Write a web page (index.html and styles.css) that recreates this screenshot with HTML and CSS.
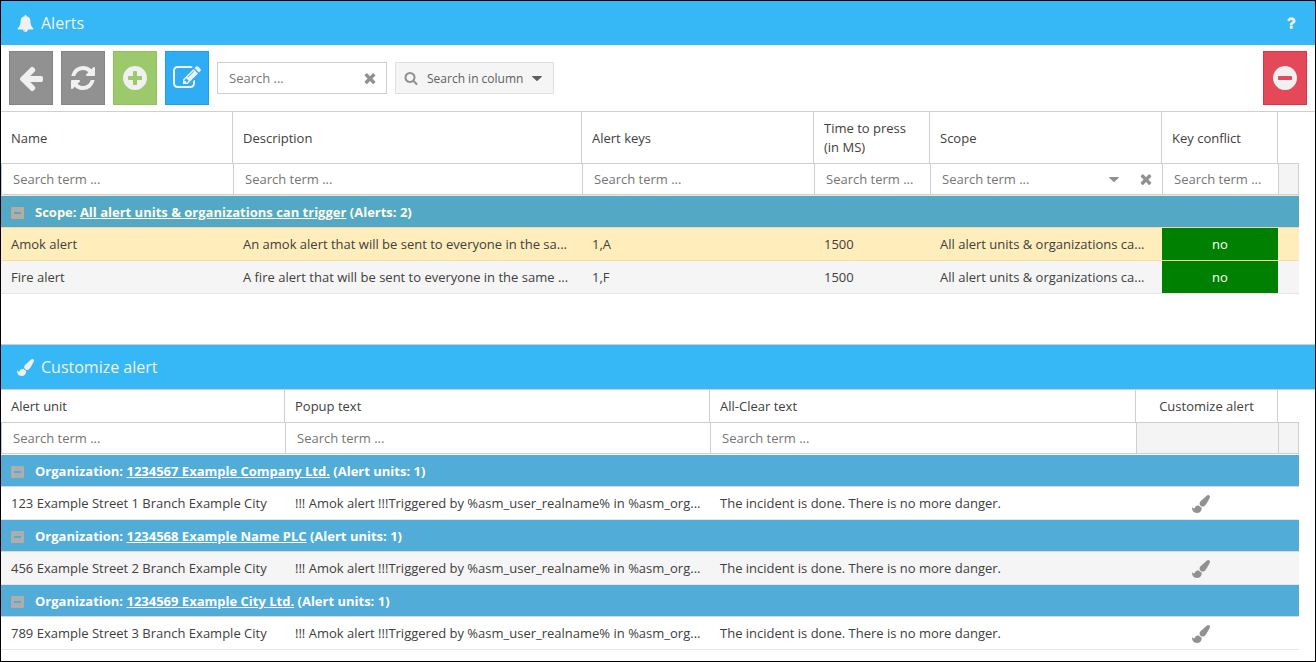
FILE: index.html
```html
<!DOCTYPE html>
<html lang="en">
<head>
<meta charset="utf-8">
<title>Alerts</title>
<link rel="stylesheet" href="styles.css">
</head>
<body>
<svg class="sprite" aria-hidden="true">
  <symbol id="i-bell" viewBox="0 0 1792 1792"><path d="M912 1696q0-16-16-16-59 0-101.500-42.500t-42.500-101.500q0-16-16-16t-16 16q0 73 51.500 124.500t124.500 51.500q16 0 16-16zm816-288q0 52-38 90t-90 38h-448q0 106-75 181t-181 75-181-75-75-181h-448q-52 0-90-38t-38-90q50-42 91-88t85-119.500 74.500-158.500 50-206 19.500-260q0-152 117-282.500t307-158.500q-8-19-8-39 0-40 28-68t68-28 68 28 28 68q0 20-8 39 190 28 307 158.500t117 282.500q0 139 19.500 260t50 206 74.500 158.500 85 119.500 91 88z"/></symbol>
  <symbol id="i-question" viewBox="0 0 1792 1792"><path d="M1088 1256v240q0 16-12 28t-28 12h-240q-16 0-28-12t-12-28v-240q0-16 12-28t28-12h240q16 0 28 12t12 28zm316-600q0 54-15.500 101t-35 76.500-55 59.500-57.500 43.500-61 35.500q-41 23-68.500 65t-27.500 67q0 17-12 32.500t-28 15.500h-240q-15 0-25.500-18.500t-10.500-37.500v-45q0-83 65-156.500t143-108.500q59-27 84-56t25-76q0-42-46.500-74t-107.500-32q-65 0-108 29-35 25-107 115-13 16-31 16-12 0-25-8l-164-125q-13-10-15.500-25t5.500-28q160-266 464-266 80 0 161 31t146 83 106 127.500 41 158.500z"/></symbol>
  <symbol id="i-back" viewBox="0 0 1792 1792"><path d="M1664 896v128q0 53-32.500 90.500t-84.500 37.500h-704l293 294q38 36 38 90t-38 90l-75 76q-37 37-90 37-52 0-91-37l-651-652q-37-37-37-90 0-52 37-91l651-650q38-38 91-38 52 0 90 38l75 74q38 38 38 91t-38 91l-293 293h704q52 0 84.500 37.500t32.500 90.500z"/></symbol>
  <symbol id="i-refresh" viewBox="0 0 1792 1792"><path d="M1639 1056q0 5-1 7-64 268-268 434.500t-478 166.500q-146 0-282.500-55t-243.500-157l-129 129q-19 19-45 19t-45-19-19-45v-448q0-26 19-45t45-19h448q26 0 45 19t19 45-19 45l-137 137q71 66 161 102t187 36q134 0 250-65t186-179q11-17 53-117 8-23 30-23h192q13 0 22.500 9.500t9.500 22.500zm25-800v448q0 26-19 45t-45 19h-448q-26 0-45-19t-19-45 19-45l138-138q-148-137-349-137-134 0-250 65t-186 179q-11 17-53 117-8 23-30 23h-199q-13 0-22.500-9.500t-9.500-22.500v-7q65-268 270-434.500t480-166.500q146 0 284 55.500t245 156.500l130-129q19-19 45-19t45 19 19 45z"/></symbol>
  <symbol id="i-plus" viewBox="0 0 1792 1792"><path d="M1344 960v-128q0-26-19-45t-45-19h-256v-256q0-26-19-45t-45-19h-128q-26 0-45 19t-19 45v256h-256q-26 0-45 19t-19 45v128q0 26 19 45t45 19h256v256q0 26 19 45t45 19h128q26 0 45-19t19-45v-256h256q26 0 45-19t19-45zm320-64q0 209-103 385.500t-279.500 279.500-385.500 103-385.500-103-279.500-279.500-103-385.500 103-385.500 279.500-279.500 385.500-103 385.500 103 279.500 279.500 103 385.500z"/></symbol>
  <symbol id="i-minus" viewBox="0 0 1792 1792"><path d="M1344 960v-128q0-26-19-45t-45-19h-768q-26 0-45 19t-19 45v128q0 26 19 45t45 19h768q26 0 45-19t19-45zm320-64q0 209-103 385.500t-279.500 279.500-385.500 103-385.500-103-279.500-279.500-103-385.500 103-385.500 279.500-279.500 385.500-103 385.500 103 279.500 279.500 103 385.500z"/></symbol>
  <symbol id="i-edit" viewBox="0 0 1792 1792"><path d="M888 1184l116-116-152-152-116 116v56h96v96h56zm440-720q-16-16-33 1l-350 350q-17 17-1 33t33-1l350-350q17-17 1-33zm80 594v190q0 119-84.500 203.500t-203.500 84.500h-832q-119 0-203.500-84.500t-84.500-203.500v-832q0-119 84.500-203.500t203.500-84.500h832q63 0 117 25 15 7 18 23 3 17-9 29l-49 49q-14 14-32 8-23-6-45-6h-832q-66 0-113 47t-47 113v832q0 66 47 113t113 47h832q66 0 113-47t47-113v-126q0-13 9-22l64-64q15-15 35-7t20 29zm-96-738l288 288-672 672h-288v-288zm444 132l-92 92-288-288 92-92q28-28 68-28t68 28l152 152q28 28 28 68t-28 68z"/></symbol>
  <symbol id="i-times" viewBox="0 0 1792 1792"><path d="M1490 1322q0 40-28 68l-136 136q-28 28-68 28t-68-28l-294-294-294 294q-28 28-68 28t-68-28l-136-136q-28-28-28-68t28-68l294-294-294-294q-28-28-28-68t28-68l136-136q28-28 68-28t68 28l294 294 294-294q28-28 68-28t68 28l136 136q28 28 28 68t-28 68l-294 294 294 294q28 28 28 68z"/></symbol>
  <symbol id="i-search" viewBox="0 0 1792 1792"><path d="M1216 832q0-185-131.500-316.500t-316.500-131.500-316.500 131.500-131.500 316.500 131.500 316.500 316.500 131.500 316.500-131.500 131.500-316.500zm512 832q0 52-38 90t-90 38q-54 0-90-38l-343-342q-179 124-399 124-143 0-273.500-55.500t-225-150-150-225-55.500-273.500 55.500-273.500 150-225 225-150 273.500-55.500 273.500 55.500 225 150 150 225 55.500 273.500q0 220-124 399l343 343q37 37 37 90z"/></symbol>
  <symbol id="i-brush" viewBox="0 0 1792 1792"><path d="M1615 0q70 0 122.500 46.500t52.500 116.500q0 63-45 151-332 629-465 752-97 91-218 91-126 0-216.500-92.500t-90.500-219.500q0-128 92-212l638-579q59-54 130-54zm-909 1034q39 76 106.500 130t150.500 76l1 71q4 213-129.500 347t-348.500 134q-123 0-218-46.500t-152.500-127.500-86.500-183-29-220q7 5 41 30t62 44.500 59 36.500 46 17q41 0 55-37 25-66 57.500-112.500t69.500-76 88-47.500 103-25.500 125-10.500z"/></symbol>
  <symbol id="i-caret" viewBox="0 0 10 5"><path d="M0.500 0h9a.5.5 0 0 1 .3.800L5.500 4.800a.7.700 0 0 1-1 0L.2.800A.5.500 0 0 1 .5 0z"/></symbol>
</svg>

<main class="app">
  <section class="panel panel-alerts">
    <header class="titlebar">
      <svg class="title-icon"><use href="#i-bell"/></svg>
      <h1 class="title">Alerts</h1>
      <button class="help" type="button" aria-label="Help"><svg class="icon-16"><use href="#i-question"/></svg></button>
    </header>
    <div class="toolbar">
      <button class="tool tool-gray" type="button" aria-label="Back"><svg class="tool-icon"><use href="#i-back"/></svg></button>
      <button class="tool tool-gray" type="button" aria-label="Refresh"><svg class="tool-icon"><use href="#i-refresh"/></svg></button>
      <button class="tool tool-green" type="button" aria-label="Add"><svg class="tool-icon"><use href="#i-plus"/></svg></button>
      <button class="tool tool-blue" type="button" aria-label="Edit"><svg class="tool-icon"><use href="#i-edit"/></svg></button>
      <div class="search">
        <input class="field" type="text" placeholder="Search ..." aria-label="Search">
        <button class="clear" type="button" aria-label="Clear search"><svg class="icon-16"><use href="#i-times"/></svg></button>
      </div>
      <button class="column-menu" type="button"><svg class="icon-14"><use href="#i-search"/></svg><span class="column-label">Search in column</span><svg class="caret"><use href="#i-caret"/></svg></button>
      <button class="tool tool-red" type="button" aria-label="Delete"><svg class="tool-icon"><use href="#i-minus"/></svg></button>
    </div>
    <div class="grid-wrap">
      <table class="grid grid-alerts">
        <colgroup><col class="w-232"><col><col class="w-232"><col class="w-116"><col class="w-232"><col class="w-116"><col class="w-21"></colgroup>
        <thead>
          <tr class="heads tall"><th>Name</th><th>Description</th><th>Alert keys</th><th class="wrap">Time to press (in MS)</th><th>Scope</th><th>Key conflict</th><td></td></tr>
          <tr class="filters">
            <td><input class="field" type="text" placeholder="Search term ..." aria-label="Filter name"></td>
            <td><input class="field" type="text" placeholder="Search term ..." aria-label="Filter description"></td>
            <td><input class="field" type="text" placeholder="Search term ..." aria-label="Filter alert keys"></td>
            <td><input class="field" type="text" placeholder="Search term ..." aria-label="Filter time to press"></td>
            <td><div class="combo"><select class="field" aria-label="Filter scope"><option>Search term ...</option></select><svg class="caret"><use href="#i-caret"/></svg><button class="clear" type="button" aria-label="Clear scope filter"><svg class="icon-16"><use href="#i-times"/></svg></button></div></td>
            <td><input class="field" type="text" placeholder="Search term ..." aria-label="Filter key conflict"></td>
            <td class="off"></td>
          </tr>
        </thead>
        <tbody>
          <tr class="group first teal"><td colspan="7"><div class="group-line"><button class="toggle" type="button" aria-label="Collapse group"></button><span>Scope: <a class="group-link" href="#">All alert units &amp; organizations can trigger</a> (Alerts: 2)</span></div></td></tr>
          <tr class="row selected"><td>Amok alert</td><td>An amok alert that will be sent to everyone in the sa...</td><td>1,A</td><td>1500</td><td>All alert units &amp; organizations ca...</td><td class="ok">no</td><td></td></tr>
          <tr class="row alt"><td>Fire alert</td><td>A fire alert that will be sent to everyone in the same ...</td><td>1,F</td><td>1500</td><td>All alert units &amp; organizations ca...</td><td class="ok">no</td><td></td></tr>
        </tbody>
      </table>
    </div>
  </section>

  <section class="panel panel-custom">
    <header class="titlebar">
      <svg class="title-icon"><use href="#i-brush"/></svg>
      <h2 class="title">Customize alert</h2>
    </header>
    <div class="grid-wrap">
      <table class="grid grid-custom">
        <colgroup><col class="w-284"><col><col class="w-426"><col class="w-142"><col class="w-21"></colgroup>
        <thead>
          <tr class="heads"><th>Alert unit</th><th>Popup text</th><th>All-Clear text</th><th class="center">Customize alert</th><td></td></tr>
          <tr class="filters">
            <td><input class="field" type="text" placeholder="Search term ..." aria-label="Filter alert unit"></td>
            <td><input class="field" type="text" placeholder="Search term ..." aria-label="Filter popup text"></td>
            <td><input class="field" type="text" placeholder="Search term ..." aria-label="Filter all-clear text"></td>
            <td class="off"></td>
            <td class="off"></td>
          </tr>
        </thead>
        <tbody>
          <tr class="group first"><td colspan="5"><div class="group-line"><button class="toggle" type="button" aria-label="Collapse group"></button><span>Organization: <a class="group-link" href="#">1234567 Example Company Ltd.</a> (Alert units: 1)</span></div></td></tr>
          <tr class="row"><td>123 Example Street 1 Branch Example City</td><td>!!! Amok alert !!!Triggered by %asm_user_realname% in %asm_org...</td><td>The incident is done. There is no more danger.</td><td class="action"><button class="paint" type="button" aria-label="Customize alert"><svg class="icon-18"><use href="#i-brush"/></svg></button></td><td></td></tr>
          <tr class="group"><td colspan="5"><div class="group-line"><button class="toggle" type="button" aria-label="Collapse group"></button><span>Organization: <a class="group-link" href="#">1234568 Example Name PLC</a> (Alert units: 1)</span></div></td></tr>
          <tr class="row alt"><td>456 Example Street 2 Branch Example City</td><td>!!! Amok alert !!!Triggered by %asm_user_realname% in %asm_org...</td><td>The incident is done. There is no more danger.</td><td class="action"><button class="paint" type="button" aria-label="Customize alert"><svg class="icon-18"><use href="#i-brush"/></svg></button></td><td></td></tr>
          <tr class="group"><td colspan="5"><div class="group-line"><button class="toggle" type="button" aria-label="Collapse group"></button><span>Organization: <a class="group-link" href="#">1234569 Example City Ltd.</a> (Alert units: 1)</span></div></td></tr>
          <tr class="row"><td>789 Example Street 3 Branch Example City</td><td>!!! Amok alert !!!Triggered by %asm_user_realname% in %asm_org...</td><td>The incident is done. There is no more danger.</td><td class="action"><button class="paint" type="button" aria-label="Customize alert"><svg class="icon-18"><use href="#i-brush"/></svg></button></td><td></td></tr>
        </tbody>
      </table>
    </div>
  </section>
</main>
</body>
</html>
```
FILE: styles.css
```css
* { box-sizing: border-box; }

body {
  margin: 0;
  background: #fff;
  color: #404040;
  font: 13px/19px "Open Sans", "Noto Sans", sans-serif;
}

button, input, select { font: inherit; color: inherit; }
button { padding: 0; border: 0; background: none; cursor: pointer; }
svg { display: block; flex: none; fill: currentColor; }

.sprite { position: absolute; width: 0; height: 0; }
.icon-14 { width: 14px; height: 14px; }
.icon-16 { width: 16px; height: 16px; }
.icon-18 { width: 18px; height: 18px; }
.tool-icon { width: 28px; height: 28px; }
.title-icon { width: 17px; height: 17px; }
.caret { width: 10px; height: 5px; }

.app {
  min-height: 100vh;
  border: 1px solid #000;
}

.panel-alerts { padding-bottom: 50px; }
.panel-custom { border-top: 1px solid #cfcfcf; }

.titlebar {
  display: flex;
  align-items: center;
  gap: 7px;
  height: 44px;
  padding: 0 16px;
  background: #36b8f6;
  color: #f0f0f0;
}
.title { flex: 1; margin: 0; font-size: 16px; line-height: 22px; font-weight: 400; }

.toolbar {
  display: flex;
  align-items: center;
  gap: 8px;
  padding: 6px 8px;
}
.tool {
  display: flex;
  align-items: center;
  justify-content: center;
  width: 44px;
  height: 54px;
  border: 1px solid;
}
.tool-gray { background: #919191; border-color: #848484; }
.tool-green { background: #9cc96b; border-color: #8fc258; }
.tool-blue { background: #2eadf5; border-color: #1aa0f0; }
.tool-red { margin-left: auto; background: #e44959; border-color: #e03346; }
.tool-icon { color: #f0f0f0; }

.search {
  display: flex;
  align-items: center;
  width: 170px;
  height: 32px;
  padding-right: 8px;
  border: 1px solid #cfcfcf;
  color: #919191;
}
.field {
  flex: 1;
  width: 100%;
  min-width: 0;
  height: 100%;
  padding: 0 0 0 11px;
  border: 0;
  outline: 0;
  background: transparent;
  color: #757575;
  appearance: none;
}
.field::placeholder { color: #757575; opacity: 1; }

.column-menu {
  display: flex;
  align-items: center;
  gap: 9px;
  height: 32px;
  padding: 0 11px 0 8px;
  border: 1px solid #e1e1e1;
  background: #f5f5f5;
  color: #606060;
}
.column-menu .icon-14 { color: #919191; }
.column-label { font-size: 12px; }

.grid-wrap { border-top: 1px solid #cfcfcf; }
.grid {
  width: calc(100% - 16px);
  table-layout: fixed;
  border-spacing: 0;
}
.w-21 { width: 21px; }
.w-116 { width: 116px; }
.w-142 { width: 142px; }
.w-232 { width: 232px; }
.w-284 { width: 284px; }
.w-426 { width: 426px; }

th, td {
  padding: 0 8px 0 10px;
  overflow: hidden;
  text-align: left;
  text-overflow: ellipsis;
  white-space: nowrap;
  font-weight: 400;
}
.center { padding: 0 10px; text-align: center; }

.heads > * { height: 33px; border-bottom: 1px solid #cfcfcf; }
.heads th { border-right: 1px solid #cfcfcf; }
.tall > * { height: 52px; padding-top: 1px; }
.heads .wrap { padding-top: 0; white-space: normal; }

.filters td {
  height: 31px;
  padding: 0;
  border-left: 1px solid #cfcfcf;
  border-bottom: 1px solid #cfcfcf;
}
.filters td:first-child { border-left-color: #b5c9e8; }
.filters td:last-child { border-right: 1px solid #cfcfcf; }
.filters .field { display: block; height: 30px; }
.filters .off { background: #f4f4f4; }
.combo { display: flex; align-items: center; padding-right: 8px; color: #919191; }
.combo .clear { margin-left: 19px; }

.row td { height: 33px; border-bottom: 1px solid #e6e6e6; }
.alt td { background: #f5f5f5; }
.selected td { background: #ffedbb; border-bottom-color: #f6dfa0; }
.row .ok { padding: 0; background: #008000; color: #fff; text-align: center; }
.row .action { padding: 0 22px 0 10px; text-align: center; }

.group td {
  height: 32px;
  padding-top: 2px;
  border-bottom: 1px solid #d9d9d9;
  background: #51acd7;
  color: #fff;
  font-weight: 700;
}
.first td { height: 33px; border-top: 1px solid #fff; }
.teal td { background: #53a8c5; border-top-color: #efe9d2; border-bottom-color: #e6d9b4; color: #fffbea; }
.group-line { display: flex; align-items: center; gap: 11px; }
.group-link { color: inherit; }

.toggle {
  display: flex;
  align-items: center;
  justify-content: center;
  width: 13px;
  height: 12px;
  border-radius: 1px;
  background: #adadad;
}
.toggle::before { content: ""; width: 7px; height: 2px; background: #51acd7; }
.teal .toggle { background: #b3aca0; }
.teal .toggle::before { background: #53a8c5; }

.paint { display: inline-block; vertical-align: middle; color: #919191; }
```
